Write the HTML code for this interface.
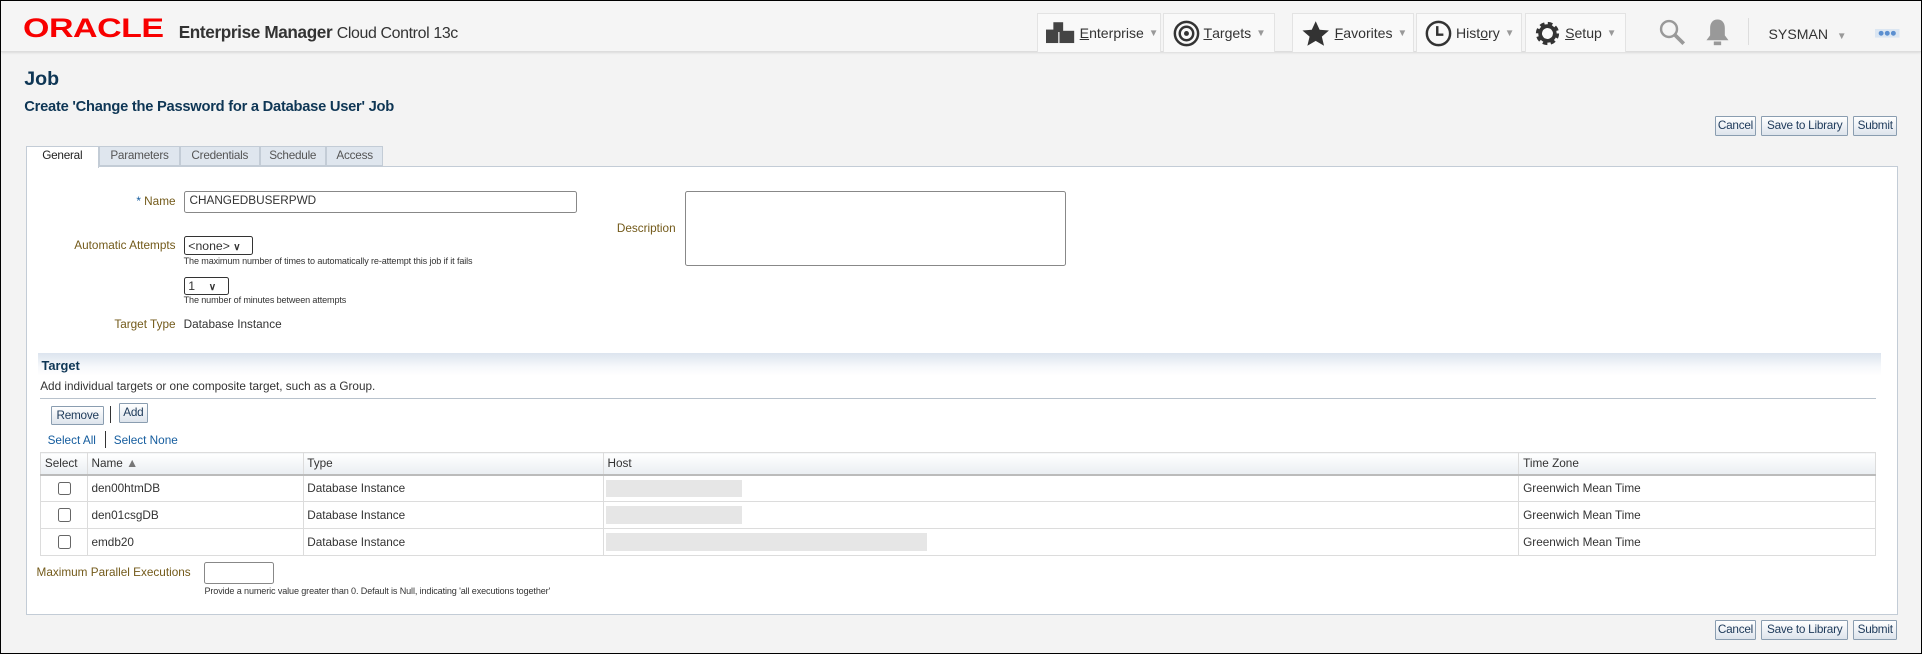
<!DOCTYPE html>
<html><head><meta charset="utf-8"><style>
*{box-sizing:border-box;margin:0;padding:0}
html,body{width:1922px;height:654px;overflow:hidden;background:#f2f2f2}
#w{zoom:1.22577;position:relative;width:1568px;height:533.5px;font-family:"Liberation Sans",sans-serif;font-size:9.6px;color:#333;border:1px solid #000;background:#f3f3f3}
.a{position:absolute;white-space:nowrap}
#hdr{position:absolute;left:0;top:0;width:1566px;height:42px;background:#f5f5f5;border-bottom:1px solid #ddd;box-shadow:0 1px 2px rgba(0,0,0,.12)}
.nb{position:absolute;top:10px;height:32px;background:#f9f9f9;border:1px solid #e3e3e3;border-bottom:none;font-size:11.5px;color:#333;display:flex;align-items:center;padding-left:7px;white-space:nowrap}
.nb u{text-decoration:underline}
.tri{color:#999;font-size:8px;margin-left:4px}
.lbl{color:#735a1a;text-align:right}
.btn{position:absolute;height:16px;border:1px solid #8a9db0;background:linear-gradient(#fff,#dde4ec);font-size:9.6px;color:#1e3a5a;text-align:center;line-height:14px;border-radius:1px;white-space:nowrap;letter-spacing:-0.2px}
.tab{position:absolute;top:118px;height:17px;border:1px solid #c3ccd6;background:#dfe6ee;color:#555;text-align:center;line-height:15px;font-size:9.6px;letter-spacing:-0.2px}
.inp{position:absolute;background:#fff;border:1px solid #888;border-radius:2px;white-space:nowrap}
.hint{font-size:7.4px;color:#333;letter-spacing:-0.1px}
table{position:absolute;left:32px;top:368px;width:1498px;border-collapse:collapse}
td,th{border:1px solid #dcdcdc;font-weight:normal;text-align:left;padding:0 3px;height:22px;font-size:9.6px;white-space:nowrap}
th{height:18px;background:linear-gradient(#fff,#eaeef2);border-bottom:2px solid #bbb}
.cb{display:inline-block;width:10px;height:11px;border:1px solid #666;border-radius:2px;background:#fff;margin-left:11px;vertical-align:middle}
.blur{display:inline-block;height:14px;background:#e6e6e6;vertical-align:middle}
a{color:#145c9e;text-decoration:none}
</style></head><body><div id="w">
<div id="hdr">
 <div class="a" style="left:18px;top:10px;font-size:22px;font-weight:bold;color:#f80000;letter-spacing:-0.3px;transform:scaleX(1.26);transform-origin:left">ORACLE</div>
 <div class="a" style="left:145px;top:17px;font-size:14px;color:#333;letter-spacing:-0.3px"><b>Enterprise Manager</b> <span style="font-size:13px">Cloud Control 13c</span></div>
 <div class="nb" style="left:845px;width:101px"><svg width="24" height="20" viewBox="0 0 24 20"><rect x="6" y="1" width="8" height="8" fill="#444"/><rect x="0" y="7" width="10" height="11" fill="#444"/><rect x="11" y="8" width="12" height="10" fill="#444"/></svg>&nbsp;<u>E</u>nterprise<span class="tri">▼</span></div>
 <div class="nb" style="left:948px;width:91px"><svg width="22" height="22" viewBox="0 0 22 22"><circle cx="11" cy="11" r="9.5" fill="none" stroke="#333" stroke-width="2"/><circle cx="11" cy="11" r="5.5" fill="none" stroke="#333" stroke-width="2"/><circle cx="11" cy="11" r="2" fill="#333"/></svg>&nbsp;<u>T</u>argets<span class="tri">▼</span></div>
 <div class="nb" style="left:1053px;width:100px"><svg width="24" height="22" viewBox="0 0 24 22"><path d="M12 1l3.2 7 7.6.6-5.8 5 1.8 7.4L12 17l-6.8 4 1.8-7.4-5.8-5 7.6-.6z" fill="#333"/></svg>&nbsp;<u>F</u>avorites<span class="tri">▼</span></div>
 <div class="nb" style="left:1154px;width:87px"><svg width="22" height="22" viewBox="0 0 22 22"><circle cx="11" cy="11" r="9.5" fill="none" stroke="#333" stroke-width="2"/><path d="M10 5v7h5" fill="none" stroke="#333" stroke-width="2"/></svg>&nbsp;Hist<u>o</u>ry<span class="tri">▼</span></div>
 <div class="nb" style="left:1243px;width:83px"><svg width="22" height="22" viewBox="0 0 22 22"><circle cx="11" cy="11" r="7" fill="none" stroke="#333" stroke-width="5" stroke-dasharray="3.2 2.3"/><circle cx="11" cy="11" r="6" fill="none" stroke="#333" stroke-width="3"/></svg>&nbsp;<u>S</u>etup<span class="tri">▼</span></div>
 <svg class="a" style="left:1352px;top:14px" width="24" height="24" viewBox="0 0 24 24"><circle cx="9" cy="9" r="6.5" fill="none" stroke="#999" stroke-width="2"/><path d="M14 14l7 7" stroke="#999" stroke-width="3"/></svg>
 <svg class="a" style="left:1389px;top:13px" width="22" height="24" viewBox="0 0 22 24"><path d="M11 2c-4 0-6 3-6 7v6l-3 4h18l-3-4V9c0-4-2-7-6-7z" fill="#999"/><rect x="8" y="20" width="6" height="3" fill="#999"/></svg>
 <div class="a" style="left:1425px;top:14px;width:1px;height:22px;background:#ddd"></div>
 <div class="a" style="left:1442px;top:20px;font-size:11.5px;color:#333">SYSMAN <span class="tri">▼</span></div>
 <svg class="a" style="left:1529px;top:23px" width="20" height="7" viewBox="0 0 20 7"><rect x="0" y="0" width="20" height="7" fill="#dbe6f2"/><circle cx="5" cy="3.5" r="2" fill="#5b8fd0"/><circle cx="10" cy="3.5" r="2" fill="#5b8fd0"/><circle cx="15" cy="3.5" r="2" fill="#5b8fd0"/></svg>
</div>
<div class="a" style="left:19px;top:55px;font-size:16px;font-weight:bold;color:#0e3655">Job</div>
<div class="a" style="left:19px;top:80px;font-size:12px;font-weight:bold;color:#0e3655;letter-spacing:-0.2px">Create 'Change the Password for a Database User' Job</div>
<div class="btn" style="left:1398px;top:94px;width:34px">Cancel</div>
<div class="btn" style="left:1436px;top:94px;width:71px">Save to Library</div>
<div class="btn" style="left:1511px;top:94px;width:36px">Submit</div>
<div class="a" style="left:20px;top:135px;width:1528px;height:366px;background:#fff;border:1px solid #c3ccd6"></div>
<div class="tab" style="left:20px;width:60px;background:#fff;border-bottom:none;height:18px;color:#222">General</div>
<div class="tab" style="left:80px;width:66px">Parameters</div>
<div class="tab" style="left:146px;width:65px">Credentials</div>
<div class="tab" style="left:211px;width:54px">Schedule</div>
<div class="tab" style="left:265px;width:47px">Access</div>
<div class="a lbl" style="right:1424px;top:158px"><span style="color:#145c9e">*</span> Name</div>
<div class="inp" style="left:149px;top:155px;width:321px;height:18px;padding:2px 4px;font-size:9.6px">CHANGEDBUSERPWD</div>
<div class="a lbl" style="right:1016px;top:180px">Description</div>
<div class="inp" style="left:558px;top:155px;width:311px;height:61px"></div>
<div class="a lbl" style="right:1424px;top:194px">Automatic Attempts</div>
<div class="inp" style="left:149px;top:192px;width:57px;height:15px;border-color:#333;padding:1px 3px;font-size:10px">&lt;none&gt; <b style="font-size:8px">&#8744;</b></div>
<div class="a hint" style="left:149px;top:208px">The maximum number of times to automatically re-attempt this job if it fails</div>
<div class="inp" style="left:149px;top:225px;width:37px;height:15px;border-color:#333;padding:1px 3px;font-size:10px">1 &nbsp;&nbsp;&nbsp;<b style="font-size:8px">&#8744;</b></div>
<div class="a hint" style="left:149px;top:240px">The number of minutes between attempts</div>
<div class="a lbl" style="right:1424px;top:259px">Target Type</div>
<div class="a" style="left:149px;top:259px">Database Instance</div>
<div class="a" style="left:30px;top:287px;width:1504px;height:19px;background:linear-gradient(#dce4ee,#f6f8fb 60%,#fff)"></div>
<div class="a" style="left:33px;top:291px;font-weight:bold;font-size:10.5px;color:#0e3655">Target</div>
<div class="a" style="left:32px;top:309px">Add individual targets or one composite target, such as a Group.</div>
<div class="a" style="left:32px;top:324px;width:1498px;height:1px;background:#b8c2cc"></div>
<div class="btn" style="left:41px;top:330px;width:43px;height:16px">Remove</div>
<div class="a" style="left:89px;top:330px;width:1px;height:14px;background:#333"></div>
<div class="btn" style="left:96px;top:328px;width:24px">Add</div>
<div class="a" style="left:38px;top:353px"><a>Select All</a></div>
<div class="a" style="left:85px;top:351px;width:1px;height:14px;background:#333"></div>
<div class="a" style="left:92px;top:353px"><a>Select None</a></div>
<table>
<tr><th style="width:38px">Select</th><th style="width:176px">Name <span style="color:#777;font-size:10px">▲</span></th><th style="width:245px">Type</th><th style="width:747px">Host</th><th>Time Zone</th></tr>
<tr><td><span class="cb"></span></td><td>den00htmDB</td><td>Database Instance</td><td style="padding-left:2px"><span class="blur" style="width:111px"></span></td><td>Greenwich Mean Time</td></tr>
<tr><td><span class="cb"></span></td><td>den01csgDB</td><td>Database Instance</td><td style="padding-left:2px"><span class="blur" style="width:111px"></span></td><td>Greenwich Mean Time</td></tr>
<tr><td><span class="cb"></span></td><td>emdb20</td><td>Database Instance</td><td style="padding-left:2px"><span class="blur" style="width:262px"></span></td><td>Greenwich Mean Time</td></tr>
</table>
<div class="a lbl" style="left:29px;top:461px">Maximum Parallel Executions</div>
<div class="inp" style="left:166px;top:458px;width:57px;height:18px"></div>
<div class="a hint" style="left:166px;top:477px">Provide a numeric value greater than 0. Default is Null, indicating 'all executions together'</div>
<div class="btn" style="left:1398px;top:505px;width:34px">Cancel</div>
<div class="btn" style="left:1436px;top:505px;width:71px">Save to Library</div>
<div class="btn" style="left:1511px;top:505px;width:36px">Submit</div>
</div></body></html>
